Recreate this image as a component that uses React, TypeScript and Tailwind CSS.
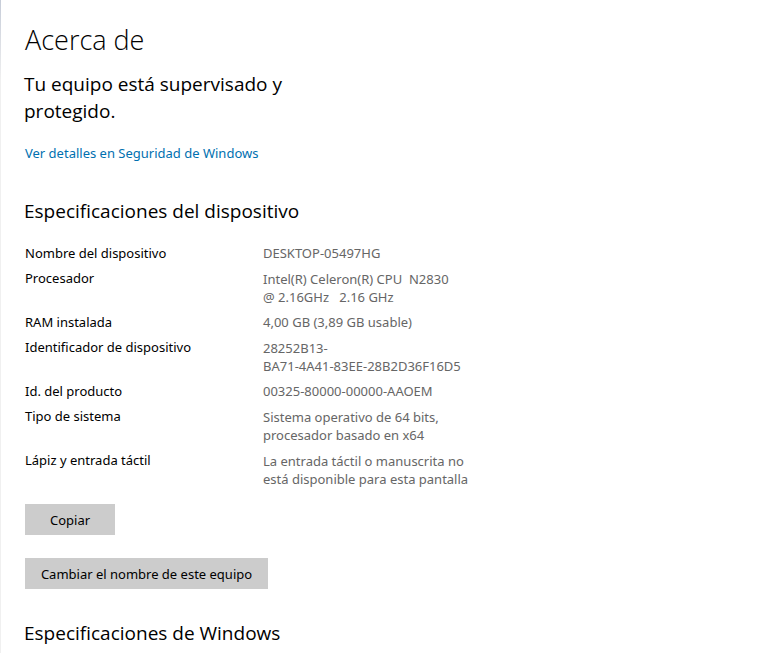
import type { ReactNode } from "react";

const specs: { label: string; lines: string[] }[] = [
  { label: "Nombre del dispositivo", lines: ["DESKTOP-05497HG"] },
  { label: "Procesador", lines: ["Intel(R) Celeron(R) CPU  N2830", "@ 2.16GHz   2.16 GHz"] },
  { label: "RAM instalada", lines: ["4,00 GB (3,89 GB usable)"] },
  { label: "Identificador de dispositivo", lines: ["28252B13-", "BA71-4A41-83EE-28B2D36F16D5"] },
  { label: "Id. del producto", lines: ["00325-80000-00000-AAOEM"] },
  { label: "Tipo de sistema", lines: ["Sistema operativo de 64 bits,", "procesador basado en x64"] },
  { label: "Lápiz y entrada táctil", lines: ["La entrada táctil o manuscrita no", "está disponible para esta pantalla"] },
];

function Heading({ children }: { children: ReactNode }) {
  return (
    <h2 className="-ml-px max-w-[280px] font-['Open_Sans','Noto_Sans',sans-serif] text-[19px] leading-[27px]">
      {children}
    </h2>
  );
}

export default function App() {
  return (
    <div className="flex min-h-screen bg-white">
      <div className="w-px shrink-0 bg-linear-to-b from-[#c6ccd8] to-[#f0f0f0] to-[80px]" />
      <main className="min-w-0 flex-1 pt-5 pl-6 font-['Noto_Sans','Open_Sans',sans-serif] text-[13px] leading-[18px] text-black">
        <h1 className="mb-3 font-['Open_Sans','Noto_Sans',sans-serif] text-[27px] leading-[39px] font-light">
          Acerca de
        </h1>
        <Heading>Tu equipo está supervisado y protegido.</Heading>
        <a href="#seguridad" className="mt-[19px] mb-9 block w-fit text-[#0070b0]">
          Ver detalles en Seguridad de Windows
        </a>
        <Heading>Especificaciones del dispositivo</Heading>
        <dl className="mt-[19px] flex flex-col gap-[7px]">
          {specs.map((s) => (
            <div key={s.label} className="flex">
              <dt className="w-[238px] shrink-0">{s.label}</dt>
              <dd className={s.lines.length > 1 ? "pt-px whitespace-pre text-[#666]" : "whitespace-pre text-[#666]"}>
                {s.lines.join("\n")}
              </dd>
            </div>
          ))}
        </dl>
        <div className="mt-4 mb-[31px] flex flex-col items-start gap-[23px]">
          <button className="h-[31px] w-[90px] bg-[#cccccc]">Copiar</button>
          <button className="h-[31px] w-[243px] bg-[#cccccc]">Cambiar el nombre de este equipo</button>
        </div>
        <Heading>Especificaciones de Windows</Heading>
      </main>
    </div>
  );
}
